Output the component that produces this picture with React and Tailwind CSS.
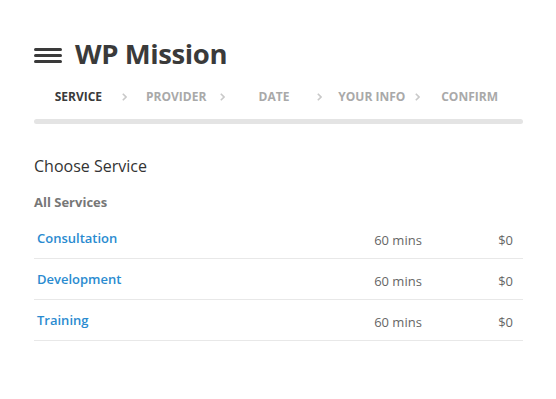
export default function App() {
  const steps = ["Service", "Provider", "Date", "Your Info", "Confirm"];
  const rows = ["Consultation", "Development", "Training"];
  return (
    <div className="w-[556px] h-[399px] bg-white" style={{ fontFamily: '"Open Sans", sans-serif' }}>
      <div className="pl-[34px] pr-[33px] pt-[38px]">
        <div className="flex items-center h-[32px]">
          <div className="flex flex-col gap-[3px] w-[28px] mr-[13px] mt-[3px]">
            <div className="h-[3px] bg-[#3a3a3a] rounded-full" />
            <div className="h-[3px] bg-[#3a3a3a] rounded-full" />
            <div className="h-[3px] bg-[#3a3a3a] rounded-full" />
          </div>
          <h1 className="text-[27.5px] font-bold text-[#3a3a3a] leading-none tracking-[-0.4px]">WP Mission</h1>
        </div>
        <div className="flex mt-[17px] h-[20px] items-center">
          {steps.map((s, i) => (
            <div key={s} className="flex-1 relative flex items-center justify-center pr-[9px]">
              <span className={`text-[12px] font-bold uppercase ${i === 0 ? "text-[#3a3a3a]" : "text-[#a9a9a9]"}`}>{s}</span>
              {i < steps.length - 1 && (
                <svg className="absolute right-[5px] top-[5px]" width="5" height="8" viewBox="0 0 5 8">
                  <polyline points="0.8,0.8 4,4 0.8,7.2" fill="none" stroke="#c9c9c9" strokeWidth="1.6" />
                </svg>
              )}
            </div>
          ))}
        </div>
        <div className="mt-[12px] h-[5px] rounded-full bg-[#e4e4e4]" />
        <div className="mt-[31px] text-[16px] text-[#333] leading-[22px]">Choose Service</div>
        <div className="mt-[16px] text-[13px] font-bold text-[#777] leading-[18px]">All Services</div>
        <div className="mt-[7px]">
          {rows.map((r) => (
            <div key={r} className="flex items-center h-[41px] pt-[6px] border-b border-[#e8e8e8] text-[13px]">
              <span className="flex-1 pl-[3px] font-semibold text-[#2a8bd0] -mt-[5px]">{r}</span>
              <span className="w-[124px] text-[#666]">60 mins</span>
              <span className="pr-[10px] text-[#666]">$0</span>
            </div>
          ))}
        </div>
      </div>
    </div>
  );
}
